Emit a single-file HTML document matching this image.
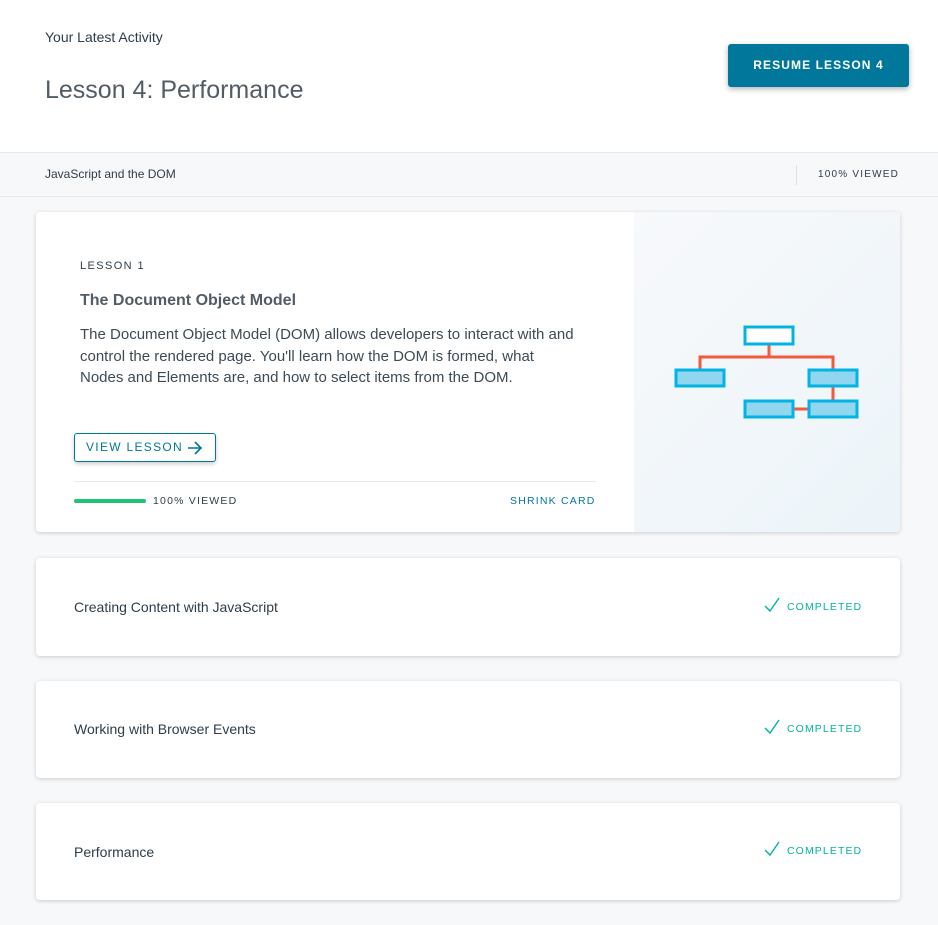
<!DOCTYPE html>
<html><head><style>
*{margin:0;padding:0;box-sizing:border-box}
body{width:938px;height:925px;background:#f7f8fa;font-family:"Liberation Sans",sans-serif;color:#2e3d49;position:relative;overflow:hidden}
.hdr{position:absolute;left:0;top:0;width:938px;height:152px;background:#fff}
.sub{position:absolute;left:0;top:152px;width:938px;height:45px;background:#f7f8f9;border-top:1px solid #e6e9ec;border-bottom:1px solid #e6e9ec}
.card{position:absolute;left:36px;width:864px;background:#fff;border-radius:4px;box-shadow:0 1px 4px rgba(0,0,0,.18)}
.t{position:absolute;white-space:nowrap}
.cap{letter-spacing:1.4px;font-size:11px}
.done{position:absolute;left:728px;font-size:10.5px;letter-spacing:1.1px;color:#02b3a1}
.done svg{position:absolute;left:0;top:-4px}
.done span{margin-left:23px}
</style></head><body>
<div class="hdr">
<div class="t" style="left:45px;top:29px;font-size:14px;color:#2e3d49">Your Latest Activity</div>
<div class="t" style="left:45px;top:76px;font-size:25px;color:#525c65;font-weight:300">Lesson 4: Performance</div>
<div class="t" style="left:728px;top:44px;width:181px;height:43px;background:#02779c;color:#fff;font-weight:bold;font-size:12px;letter-spacing:1.1px;text-align:center;line-height:43px;border-radius:3px;box-shadow:0 2px 6px rgba(0,0,0,.3)">RESUME LESSON 4</div>
</div>
<div class="sub">
<div class="t" style="left:45px;top:14px;font-size:12px">JavaScript and the DOM</div>
<div style="position:absolute;left:796px;top:12px;width:1px;height:20px;background:#dbe2e8"></div>
<div class="t cap" style="left:818px;top:16px;font-size:10px;letter-spacing:1.2px">100% VIEWED</div>
</div>
<div class="card" style="top:212px;height:320px;overflow:hidden">
<div style="position:absolute;left:598px;top:0;width:266px;height:320px;background:linear-gradient(135deg,#f7f9fb,#ecf4f9)"></div>
<svg style="position:absolute;left:0;top:0" width="864" height="320">
<g transform="translate(-36,-212)" stroke-width="3">
<path d="M769 344V357M700 370V357H833V370M833 386V401M793 409H809" stroke="#f25a3c" fill="none"/>
<rect x="745" y="327" width="48" height="17" fill="#fff" stroke="#02b3e4"/>
<rect x="676" y="370" width="48" height="16" fill="#8fd6ee" stroke="#02b3e4"/>
<rect x="809" y="370" width="48" height="16" fill="#8fd6ee" stroke="#02b3e4"/>
<rect x="745" y="401" width="48" height="16" fill="#8fd6ee" stroke="#02b3e4"/>
<rect x="809" y="401" width="48" height="16" fill="#8fd6ee" stroke="#02b3e4"/>
</g></svg>
<div class="t cap" style="left:44px;top:48px">LESSON 1</div>
<div class="t" style="left:44px;top:80px;font-size:16px;font-weight:bold;color:#525c65">The Document Object Model</div>
<div class="t" style="left:44px;top:112px;font-size:15px;line-height:21.5px;color:#3d4a55;white-space:normal;width:498px">The Document Object Model (DOM) allows developers to interact with and control the rendered page. You'll learn how the DOM is formed, what Nodes and Elements are, and how to select items from the DOM.</div>
<div class="t" style="left:38px;top:221px;width:142px;height:29px;border:1px solid #02779c;border-radius:3px;box-shadow:0 2px 4px rgba(0,0,0,.2);font-size:12px;letter-spacing:1.3px;color:#02779c;line-height:27px;padding-left:11px">VIEW LESSON <svg style="position:absolute;left:112px;top:7px" width="16" height="14"><path d="M1 7H14M8 1L14 7L8 13" stroke="#02779c" stroke-width="1.6" fill="none"/></svg></div>
<div style="position:absolute;left:38px;top:269px;width:522px;height:1px;background:#e6e9ec"></div>
<div style="position:absolute;left:38px;top:287px;width:72px;height:4px;border-radius:2px;background:#1fc373"></div>
<div class="t cap" style="left:117px;top:283px;font-size:10.5px;letter-spacing:1.2px">100% VIEWED</div>
<div class="t cap" style="left:474px;top:283px;font-size:10.5px;letter-spacing:1.2px;color:#02779c">SHRINK CARD</div>
</div>
<div class="card" style="top:558px;height:98px">
<div class="t" style="left:38px;top:41px;font-size:14px">Creating Content with JavaScript</div>
<div class="done" style="top:43px"><svg width="16" height="16"><path d="M1 9l5 5 9-13" stroke="#02b3a1" fill="none" stroke-width="1.4"/></svg><span>COMPLETED</span></div>
</div>
<div class="card" style="top:681px;height:97px">
<div class="t" style="left:38px;top:40px;font-size:14px">Working with Browser Events</div>
<div class="done" style="top:42px"><svg width="16" height="16"><path d="M1 9l5 5 9-13" stroke="#02b3a1" fill="none" stroke-width="1.4"/></svg><span>COMPLETED</span></div>
</div>
<div class="card" style="top:803px;height:97px">
<div class="t" style="left:38px;top:41px;font-size:14px">Performance</div>
<div class="done" style="top:42px"><svg width="16" height="16"><path d="M1 9l5 5 9-13" stroke="#02b3a1" fill="none" stroke-width="1.4"/></svg><span>COMPLETED</span></div>
</div>
</body></html>
